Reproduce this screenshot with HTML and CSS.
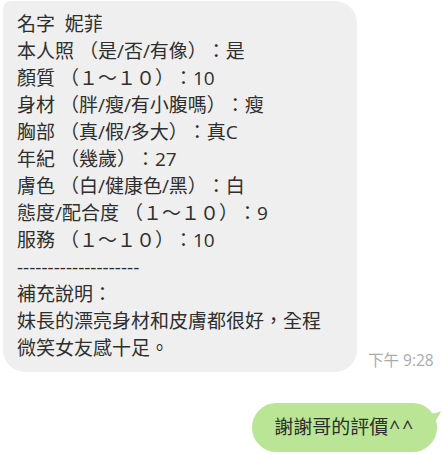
FILE: index.html
```html
<!DOCTYPE html>
<html lang="zh-Hant">
<head>
<meta charset="utf-8">
<title>聊天</title>
<link rel="stylesheet" href="styles.css">
</head>
<body>
<div class="chat">
  <div class="row row-in">
    <div class="bubble bubble-in">
      <div class="line">名字&nbsp;&nbsp;妮菲</div>
      <div class="line">本人照 （是/否/有像）：是</div>
      <div class="line">顏質 （１～１０）：10</div>
      <div class="line">身材 （胖/瘦/有小腹嗎）：瘦</div>
      <div class="line">胸部 （真/假/多大）：真C</div>
      <div class="line">年紀 （幾歲）：27</div>
      <div class="line">膚色 （白/健康色/黑）：白</div>
      <div class="line">態度/配合度 （１～１０）：9</div>
      <div class="line">服務 （１～１０）：10</div>
      <div class="line">--------------------</div>
      <div class="line">補充說明：</div>
      <div class="line">妹長的漂亮身材和皮膚都很好，全程微笑女友感十足。</div>
    </div>
    <span class="time">下午 9:28</span>
  </div>
  <div class="row row-out">
    <div class="bubble bubble-out">
      謝謝哥的評價<span class="caret">^^</span>
      <svg class="tail" width="14" height="16" viewBox="0 0 14 16"><path d="M0 2 C5 3 9 2 13 0 C11 5 8 10 2 15 Z" fill="#b9e594"/></svg>
    </div>
  </div>
</div>
</body>
</html>
```
FILE: styles.css
```css
html, body {
  margin: 0;
  padding: 0;
  background: #ffffff;
}

.chat {
  width: 443px;
  height: 455px;
  overflow: hidden;
  font-family: "Open Sans", "Noto Sans CJK JP", "Noto Sans CJK TC", sans-serif;
  color: #2e2e2e;
  font-size: 19px;
  text-spacing-trim: space-all;
}

.row {
  display: flex;
  align-items: flex-end;
}

.row-in {
  padding: 1px 0 0 3px;
}

.bubble-in {
  width: 314px;
  background: #efefef;
  border-radius: 8px 22px 22px 22px;
  padding: 10px 26px 10px 14px;
  line-height: 27px;
}

.time {
  margin: 0 0 3px 11px;
  font-size: 15.5px;
  line-height: 18px;
  color: #ababab;
  white-space: nowrap;
}

.row-out {
  justify-content: flex-end;
  padding: 31px 6px 0 0;
}

.bubble-out {
  position: relative;
  background: #b9e594;
  border-radius: 25px;
  height: 49px;
  line-height: 49px;
  padding: 0 22px 0 22px;
}

.caret {
  letter-spacing: 2px;
  margin-left: 1px;
}

.tail {
  position: absolute;
  right: -5px;
  top: 8px;
}
```
